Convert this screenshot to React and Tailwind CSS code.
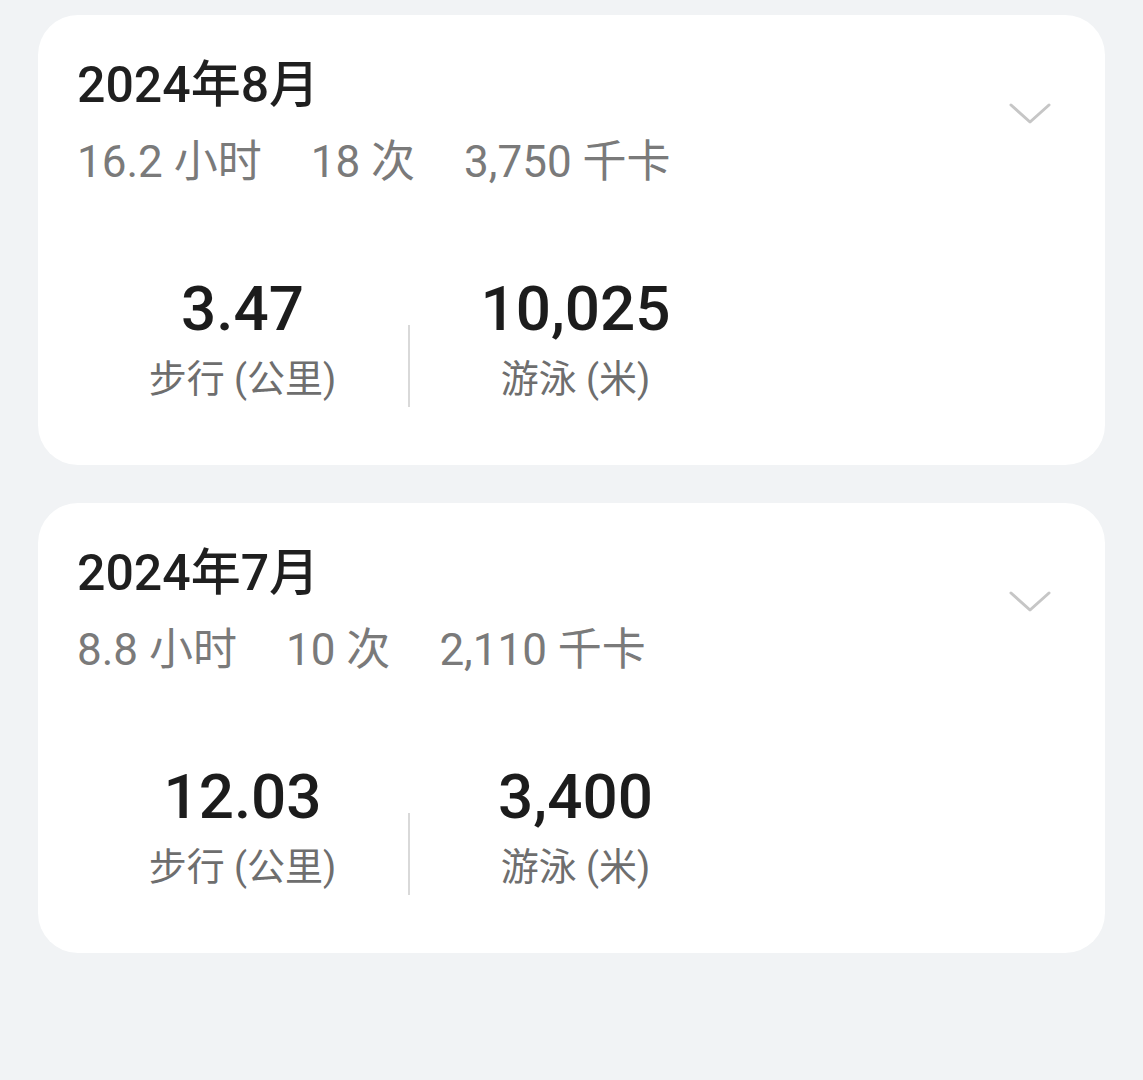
const months = [
  {
    title: "2024年8月",
    hours: "16.2",
    times: "18",
    kcal: "3,750",
    walk: "3.47",
    swim: "10,025",
  },
  {
    title: "2024年7月",
    hours: "8.8",
    times: "10",
    kcal: "2,110",
    walk: "12.03",
    swim: "3,400",
  },
];

function Chevron() {
  return (
    <svg width="42" height="22" viewBox="0 0 42 22" fill="none">
      <path
        d="M2 2 L21 19 L40 2"
        stroke="#c6c6c6"
        strokeWidth="3"
        strokeLinecap="round"
        strokeLinejoin="round"
      />
    </svg>
  );
}

function MonthCard({ m }) {
  return (
    <div className="bg-white rounded-[40px] h-[450px] pl-[39px] pr-[54px] pt-[41px] flex flex-col">
      {/* header */}
      <div className="flex justify-between items-start">
        <div>
          <div className="text-[50px] leading-[58px] font-medium text-[#1f1f1f]">
            {m.title}
          </div>
          <div className="mt-[22px] text-[44px] leading-[52px] text-[#7a7a7a] flex gap-[49px]">
            <span>{m.hours} 小时</span>
            <span>{m.times} 次</span>
            <span>{m.kcal} 千卡</span>
          </div>
        </div>
        <div className="mt-[47px]">
          <Chevron />
        </div>
      </div>

      {/* stats */}
      <div className="mt-[88px] flex items-start">
        <div className="w-[331px] flex flex-col items-center">
          <div className="text-[62px] leading-[66px] font-medium text-[#1c1c1c]">
            {m.walk}
          </div>
          <div className="mt-[15px] text-[38px] leading-[44px] text-[#6e6e6e]">
            步行 (公里)
          </div>
        </div>
        <div className="w-[2px] h-[82px] bg-[#d9d9d9] mt-[49px]" />
        <div className="w-[331px] flex flex-col items-center">
          <div className="text-[62px] leading-[66px] font-medium text-[#1c1c1c]">
            {m.swim}
          </div>
          <div className="mt-[15px] text-[38px] leading-[44px] text-[#6e6e6e]">
            游泳 (米)
          </div>
        </div>
      </div>
    </div>
  );
}

export default function App() {
  return (
    <div
      className="min-h-[1080px] bg-[#f1f3f5] px-[38px] pt-[15px] flex flex-col gap-[38px]"
      style={{ fontFamily: "Roboto, 'Noto Sans CJK SC', sans-serif" }}
    >
      {months.map((m) => (
        <MonthCard key={m.title} m={m} />
      ))}
    </div>
  );
}
